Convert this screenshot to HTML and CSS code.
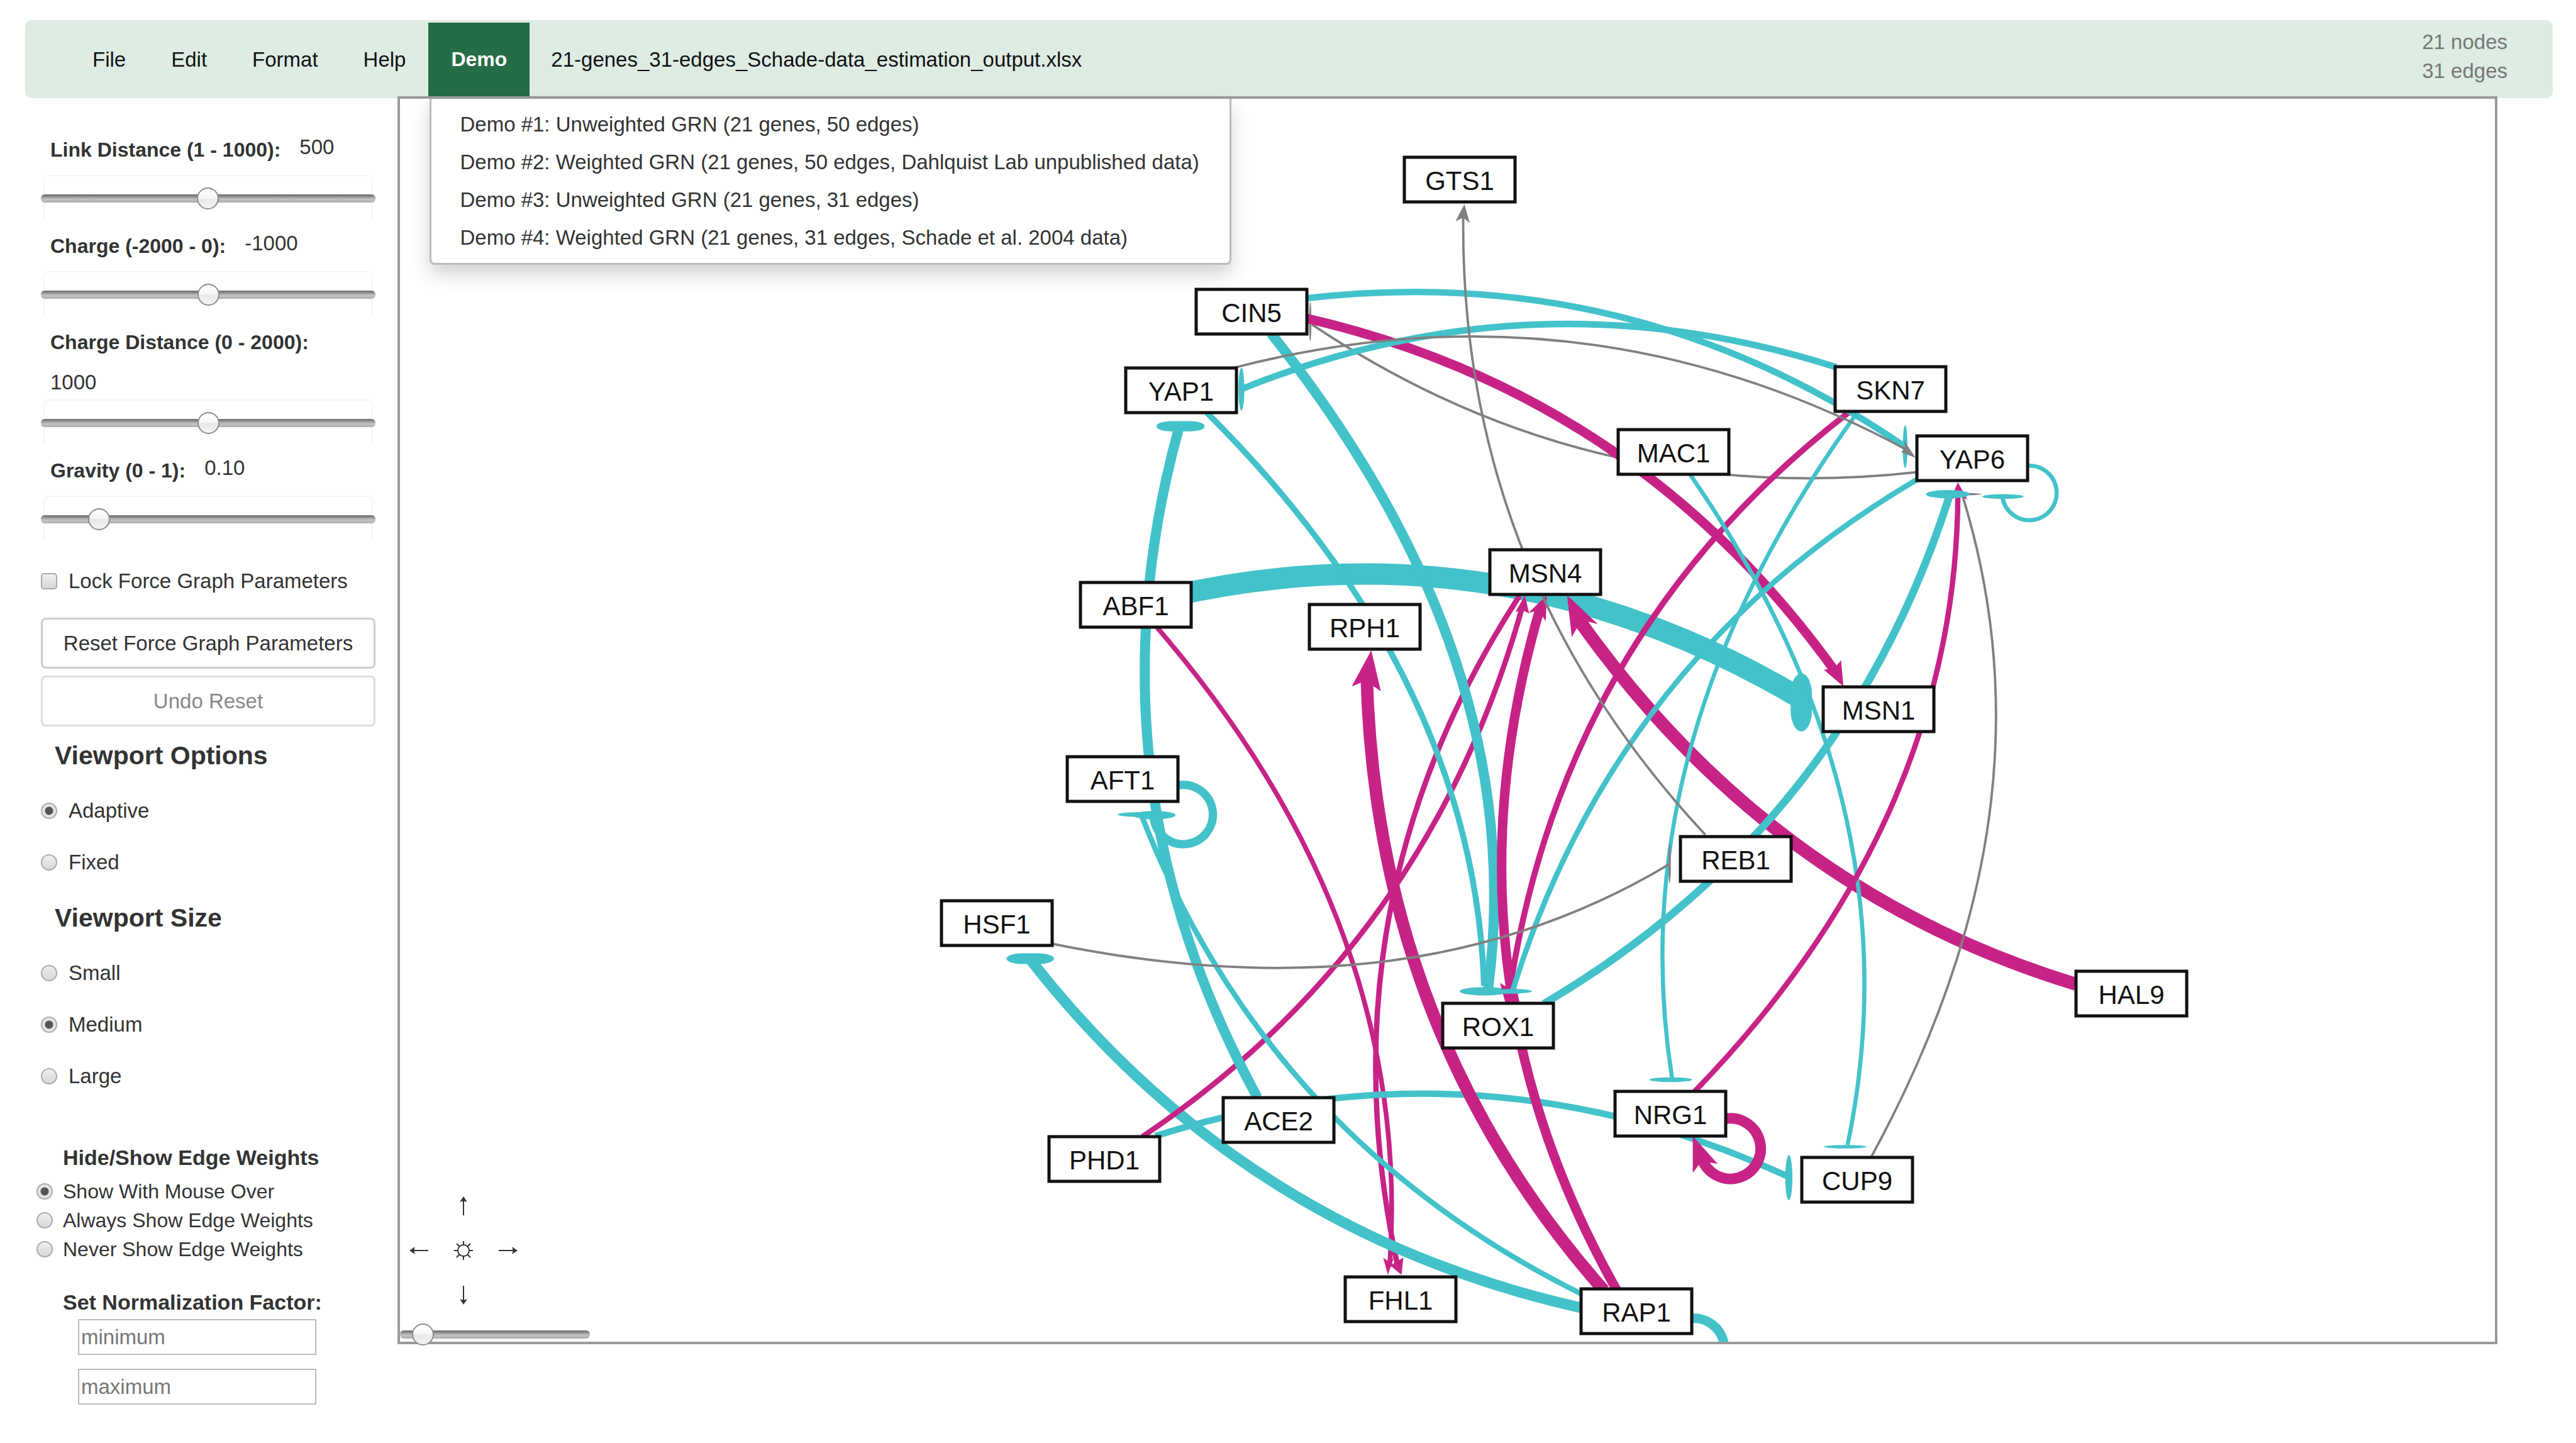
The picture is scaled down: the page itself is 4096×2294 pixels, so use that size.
FILE: index.html
```html
<!DOCTYPE html>
<html lang="en">
<head>
<meta charset="utf-8">
<title>GRNsight</title>
<link rel="stylesheet" href="styles.css">
</head>
<body>
<header class="navbar">
  <nav>
    <ul class="menu">
      <li><a class="menu-link" href="#file">File</a></li>
      <li><a class="menu-link" href="#edit">Edit</a></li>
      <li><a class="menu-link" href="#format">Format</a></li>
      <li><a class="menu-link" href="#help">Help</a></li>
      <li class="dropdown">
        <a class="menu-link menu-link-open" href="#demo">Demo</a>
        <ul class="dropdown-menu">
          <li><a href="#demo1">Demo #1: Unweighted GRN (21 genes, 50 edges)</a></li>
          <li><a href="#demo2">Demo #2: Weighted GRN (21 genes, 50 edges, Dahlquist Lab unpublished data)</a></li>
          <li><a href="#demo3">Demo #3: Unweighted GRN (21 genes, 31 edges)</a></li>
          <li><a href="#demo4">Demo #4: Weighted GRN (21 genes, 31 edges, Schade et al. 2004 data)</a></li>
        </ul>
      </li>
      <li class="file-name">21-genes_31-edges_Schade-data_estimation_output.xlsx</li>
    </ul>
  </nav>
  <div class="counts">
    <div>21 nodes</div>
    <div>31 edges</div>
  </div>
</header>

<main class="workspace">
  <aside class="sidebar">
    <section class="params">
      <div class="param">
        <div class="param-head"><label for="link">Link Distance (1 - 1000):</label><output for="link">500</output></div>
        <div class="param-box"><input class="slider" id="link" type="range" min="1" max="1000" value="500"></div>
      </div>
      <div class="param">
        <div class="param-head"><label for="charge">Charge (-2000 - 0):</label><output for="charge">-1000</output></div>
        <div class="param-box"><input class="slider" id="charge" type="range" min="-2000" max="0" value="-1000"></div>
      </div>
      <div class="param">
        <div class="param-head param-head-stacked"><label for="chargedist">Charge Distance (0 - 2000):</label><output for="chargedist">1000</output></div>
        <div class="param-box"><input class="slider" id="chargedist" type="range" min="0" max="2000" value="1000"></div>
      </div>
      <div class="param">
        <div class="param-head"><label for="gravity">Gravity (0 - 1):</label><output for="gravity">0.10</output></div>
        <div class="param-box"><input class="slider" id="gravity" type="range" min="0" max="1" step="0.01" value="0.15"></div>
      </div>
    </section>

    <label class="choice lock"><input class="tick" type="checkbox">Lock Force Graph Parameters</label>

    <div class="actions">
      <button class="btn" type="button">Reset Force Graph Parameters</button>
      <button class="btn" type="button" disabled>Undo Reset</button>
    </div>

    <h3 class="group-title">Viewport Options</h3>
    <div class="choices">
      <label class="choice"><input class="dot" type="radio" name="mode" checked>Adaptive</label>
      <label class="choice"><input class="dot" type="radio" name="mode">Fixed</label>
    </div>

    <h3 class="group-title group-title-next">Viewport Size</h3>
    <div class="choices">
      <label class="choice"><input class="dot" type="radio" name="size">Small</label>
      <label class="choice"><input class="dot" type="radio" name="size" checked>Medium</label>
      <label class="choice"><input class="dot" type="radio" name="size">Large</label>
    </div>

    <section class="weights">
      <h4 class="weights-title">Hide/Show Edge Weights</h4>
      <div class="weights-list">
        <label class="choice"><input class="dot" type="radio" name="weights" checked>Show With Mouse Over</label>
        <label class="choice"><input class="dot" type="radio" name="weights">Always Show Edge Weights</label>
        <label class="choice"><input class="dot" type="radio" name="weights">Never Show Edge Weights</label>
      </div>
      <h4 class="weights-title">Set Normalization Factor:</h4>
      <div class="factors">
        <input type="text" aria-label="Minimum" placeholder="minimum">
        <input type="text" aria-label="Maximum" placeholder="maximum">
      </div>
    </section>
  </aside>

  <section class="canvas">
    <svg class="graph" viewBox="0 0 3331 1976" role="img" aria-label="Gene regulatory network">
      <g class="edges" transform="translate(-636 -157) scale(0.9431)">
        <path class="down" stroke-width="36" d="M1975 1005Q2534 879 3037 1178"/>
        <rect class="cap down" x="3019" y="1135" width="36" height="98" rx="18" ry="36"/>
        <path class="up" stroke-width="9" d="M2562 1004Q2225 1522 2356 2132"/>
        <path class="up" stroke-width="8" d="M1951 1058C2215 1364 2372 1721 2343 2135"/>
        <path class="cap up" d="M2340 2149L2332 2120L2342 2127L2350 2120ZM2363 2149L2344 2133L2356 2126L2366 2120Z"/>
        <path class="down" stroke-width="18" d="M2668 2205Q2098 2078 1739 1620"/>
        <rect class="cap down" x="1697" y="1607" width="80" height="18" rx="26" ry="9"/>
        <path class="down" stroke-width="11" d="M1948 1915Q2491 1744 3012 1982"/>
        <ellipse class="cap down" cx="3016" cy="1985" rx="6" ry="38"/>
        <path class="up" stroke-width="9" d="M1926 1916Q2409 1592 2568 1018"/>
        <path class="cap up" d="M2571 1003L2555 1032L2566 1028L2578 1034Z"/>
        <path class="down" stroke-width="9" d="M2668 2182Q2138 1919 1926 1378"/>
        <ellipse class="cap down" cx="1922" cy="1373" rx="38" ry="4"/>
        <path class="grey" stroke-width="4" d="M3232 796Q2676 858 2212 547"/>
        <ellipse class="cap grey" cx="2209" cy="542" rx="2" ry="33"/>
        <path class="down" stroke-width="10" d="M2034 695C2300 959 2490 1281 2502 1662"/>
        <ellipse class="cap down" cx="2498" cy="1670" rx="36" ry="5"/>
        <path class="up" stroke-width="16" d="M2200 536Q2763 665 3100 1140"/>
        <path class="cap up" d="M3108 1157L3104 1113L3092 1127L3075 1129Z"/>
        <path class="down" stroke-width="11" d="M3096 619Q2590 457 2095 655"/>
        <ellipse class="cap down" cx="2093" cy="656" rx="5" ry="36"/>
        <path class="down" stroke-width="17" d="M2143 562C2397 881 2563 1249 2509 1666"/>
        <ellipse class="cap down" cx="2503" cy="1671" rx="42" ry="7"/>
        <path class="up" stroke-width="22" d="M3500 1659Q2984 1502 2660 1042"/>
        <path class="cap up" d="M2642 1003L2650 1074L2660 1056L2678 1048L2694 1052Z"/>
        <path class="up" stroke-width="10" d="M3117 695Q2636 1067 2545 1672"/>
        <path class="down" stroke-width="11" d="M2200 503Q2751 439 3209 751"/>
        <ellipse class="cap down" cx="3212" cy="753" rx="4" ry="36"/>
        <path class="down" stroke-width="7" d="M2849 799C3086 1141 3201 1518 3115 1930"/>
        <ellipse class="cap down" cx="3111" cy="1933" rx="36" ry="3"/>
        <path class="down" stroke-width="7" d="M3131 696C2890 1029 2754 1402 2819 1817"/>
        <ellipse class="cap down" cx="2817" cy="1820" rx="36" ry="4"/>
        <path class="up" stroke-width="21" d="M2704 2175Q2318 1738 2304 1132"/>
        <path class="cap up" d="M2312 1096L2279 1157L2294 1151L2313 1155L2328 1165Z"/>
        <path class="up" stroke-width="16" d="M2726 2175Q2419 1631 2597 1024"/>
        <path class="cap up" d="M2608 1003L2577 1033L2590 1030L2600 1038L2606 1047ZM2538 1690L2529 1657L2541 1664L2556 1662L2562 1690Z"/>
        <path class="down" stroke-width="9" d="M3236 806Q2726 1104 2551 1668"/>
        <ellipse class="cap down" cx="2546" cy="1671" rx="37" ry="4"/>
        <path class="up" stroke-width="9" d="M2856 1841C3126 1563 3300 1228 3301 830"/>
        <path class="cap up" d="M3301 813L3288 843L3301 836L3317 842Z"/>
        <path class="grey" stroke-width="4" d="M3155 1950C3347 1598 3430 1226 3308 833"/>
        <ellipse class="cap grey" cx="3306" cy="833" rx="35" ry="2"/>
        <path class="down" stroke-width="13" d="M2603 1692Q3108 1395 3286 838"/>
        <ellipse class="cap down" cx="3284" cy="833" rx="37" ry="7"/>
        <path class="down" stroke-width="17" d="M2120 1850Q1825 1309 1988 720"/>
        <rect class="cap down" x="1950" y="710" width="81" height="17" rx="24" ry="8"/>
        <path class="down" stroke-width="14" d="M1985 1324A50 50 0 1 1 1945 1376"/>
        <ellipse class="cap down" cx="1946" cy="1374" rx="36" ry="7"/>
        <path class="up" stroke-width="18" d="M2908 1886A51 51 0 1 1 2869 1952"/>
        <path class="cap up" d="M2854 1915L2854 1977L2869 1957L2896 1962Z"/>
        <path class="down" stroke-width="7" d="M3418 785A46 46 0 1 1 3376 838"/>
        <ellipse class="cap down" cx="3377" cy="837" rx="35" ry="4"/>
        <path class="down" stroke-width="16" d="M2852 2222A52 52 0 0 1 2907 2280"/>
        <path class="grey" stroke-width="4" d="M2875 1407Q2461 962 2467 365"/>
        <path class="cap grey" d="M2469 344L2454 373L2467 367L2478 376Z"/>
        <path class="grey" stroke-width="4" d="M1774 1591C2145 1666 2498 1646 2814 1457"/>
        <ellipse class="cap grey" cx="2815" cy="1455" rx="2" ry="34"/>
        <path class="grey" stroke-width="4" d="M2080 620Q2675 466 3218 760"/>
        <path class="cap grey" d="M3230 772L3205 762L3213 756L3209 741Z"/>
      </g>
      <g class="nodes">
        <g transform="translate(1685 129)"><rect class="box" x="-88" y="-36" width="176" height="71"/><text y="16">GTS1</text></g>
        <g transform="translate(1354 339)"><rect class="box" x="-88" y="-36" width="176" height="71"/><text y="16">CIN5</text></g>
        <g transform="translate(1242 464)"><rect class="box" x="-88" y="-36" width="176" height="71"/><text y="16">YAP1</text></g>
        <g transform="translate(2370 462)"><rect class="box" x="-88" y="-36" width="176" height="71"/><text y="16">SKN7</text></g>
        <g transform="translate(2025 562)"><rect class="box" x="-88" y="-36" width="176" height="71"/><text y="16">MAC1</text></g>
        <g transform="translate(2500 572)"><rect class="box" x="-88" y="-36" width="176" height="71"/><text y="16">YAP6</text></g>
        <g transform="translate(1821 753)"><rect class="box" x="-88" y="-36" width="176" height="71"/><text y="16">MSN4</text></g>
        <g transform="translate(1170 805)"><rect class="box" x="-88" y="-36" width="176" height="71"/><text y="16">ABF1</text></g>
        <g transform="translate(1534 840)"><rect class="box" x="-88" y="-36" width="176" height="71"/><text y="16">RPH1</text></g>
        <g transform="translate(2351 971)"><rect class="box" x="-88" y="-36" width="176" height="71"/><text y="16">MSN1</text></g>
        <g transform="translate(1149 1082)"><rect class="box" x="-88" y="-36" width="176" height="71"/><text y="16">AFT1</text></g>
        <g transform="translate(2124 1209)"><rect class="box" x="-88" y="-36" width="176" height="71"/><text y="16">REB1</text></g>
        <g transform="translate(949 1311)"><rect class="box" x="-88" y="-36" width="176" height="71"/><text y="16">HSF1</text></g>
        <g transform="translate(2753 1423)"><rect class="box" x="-88" y="-36" width="176" height="71"/><text y="16">HAL9</text></g>
        <g transform="translate(1746 1474)"><rect class="box" x="-88" y="-36" width="176" height="71"/><text y="16">ROX1</text></g>
        <g transform="translate(1397 1624)"><rect class="box" x="-88" y="-36" width="176" height="71"/><text y="16">ACE2</text></g>
        <g transform="translate(2020 1614)"><rect class="box" x="-88" y="-36" width="176" height="71"/><text y="16">NRG1</text></g>
        <g transform="translate(1120 1686)"><rect class="box" x="-88" y="-36" width="176" height="71"/><text y="16">PHD1</text></g>
        <g transform="translate(2317 1719)"><rect class="box" x="-88" y="-36" width="176" height="71"/><text y="16">CUP9</text></g>
        <g transform="translate(1591 1909)"><rect class="box" x="-88" y="-36" width="176" height="71"/><text y="16">FHL1</text></g>
        <g transform="translate(1966 1928)"><rect class="box" x="-88" y="-36" width="176" height="71"/><text y="16">RAP1</text></g>
      </g>
    </svg>

    <div class="pan">
      <button class="pan-up" type="button" aria-label="Scroll up"><svg viewBox="0 0 32 32"><path d="M16 31V4"/><path class="head" d="M16 1L22 10Q16 7 10 10Z"/></svg></button>
      <button class="pan-left" type="button" aria-label="Scroll left"><svg viewBox="0 0 32 32"><path d="M31 16H4"/><path class="head" d="M1 16L10 10Q7 16 10 22Z"/></svg></button>
      <button class="pan-center" type="button" aria-label="Center"><svg viewBox="0 0 32 32"><circle cx="16" cy="16" r="9"/><path d="M16 7V1M16 25V31M7 16H1M25 16H31M22 10L27 5M10 10L5 5M22 22L27 27M10 22L5 27"/></svg></button>
      <button class="pan-right" type="button" aria-label="Scroll right"><svg viewBox="0 0 32 32"><path d="M1 16H28"/><path class="head" d="M31 16L22 10Q25 16 22 22Z"/></svg></button>
      <button class="pan-down" type="button" aria-label="Scroll down"><svg viewBox="0 0 32 32"><path d="M16 1V28"/><path class="head" d="M16 31L22 22Q16 25 10 22Z"/></svg></button>
    </div>
    <input class="slider zoom" type="range" aria-label="Zoom" min="0" max="100" value="7">
  </section>
</main>
</body>
</html>
```
FILE: styles.css
```css
* {
  box-sizing: border-box;
}

body {
  margin: 0;
  padding-top: 32px;
  background: #fff;
  color: #333;
  font: 33px/46px "Liberation Sans", Arial, sans-serif;
}

ul {
  margin: 0;
  padding: 0;
  list-style: none;
}

a {
  color: inherit;
  text-decoration: none;
}

h3,
h4 {
  margin: 0;
}

button,
input {
  margin: 0;
  color: inherit;
  font: inherit;
}

/* Top bar */

.navbar {
  display: flex;
  justify-content: space-between;
  margin: 0 37px 0 40px;
  padding: 4px 72px 3px 71px;
  border-radius: 10px;
  background: #deece4;
}

.menu {
  display: flex;
  color: #111;
}

.menu-link,
.file-name {
  display: block;
  padding: 0 36px;
  line-height: 117px;
}

.file-name {
  padding-left: 34px;
}

.menu-link-open {
  background: #256d46;
  color: #fff;
  font-size: 32px;
  font-weight: bold;
}

.dropdown {
  position: relative;
}

.dropdown-menu {
  position: absolute;
  z-index: 2;
  top: 121px;
  left: 2px;
  padding: 11px 48px 10px 45px;
  border: 3px solid #bbb;
  border-top: 0;
  border-radius: 0 0 8px 8px;
  background: #fff;
  box-shadow: 0 15px 30px rgba(0, 0, 0, 0.175);
  color: #333;
  line-height: 60px;
  white-space: nowrap;
}

.counts {
  padding-top: 8px;
  color: #777;
}

/* Page body */

.workspace {
  display: grid;
  grid-template-columns: 632px 1fr;
  align-items: start;
  margin-top: -3px;
  padding-right: 125px;
}

.sidebar {
  padding: 62px 35px 0 65px;
}

.param {
  margin-bottom: 20px;
}

.param-head {
  display: flex;
  gap: 30px;
  padding: 0 15px 17px;
}

.param-head label {
  font-size: 32px;
  font-weight: bold;
}

.param-head output {
  line-height: 38px;
}

.param-head-stacked {
  flex-direction: column;
  gap: 22px;
  padding-bottom: 8px;
}

.param-box {
  height: 70px;
  margin: 0 4px;
  padding-top: 18px;
  border: 2px solid #f5f5f5;
  border-bottom: 0;
  border-radius: 8px 8px 0 0;
}

.param-box .slider {
  width: calc(100% + 12px);
  margin: 0 -6px;
}

.slider {
  display: block;
  height: 35px;
  background: none;
  appearance: none;
}

.slider::-webkit-slider-runnable-track {
  height: 13px;
  border-radius: 6px;
  background: linear-gradient(#777 0 2px, #999 4px, #c4c4c4 8px, #aaa);
}

.slider::-webkit-slider-thumb {
  width: 35px;
  height: 35px;
  margin-top: -11px;
  border: 2px solid #8c8c8c;
  border-radius: 50%;
  background: linear-gradient(#fff, #f4f5f5 50%, #e8e9e9 50%, #f2f3f3);
  appearance: none;
}

.choice {
  display: flex;
  align-items: center;
  gap: 18px;
}

.tick,
.dot {
  flex: none;
  width: 26px;
  height: 26px;
  border: 2px solid #aaa;
  background: linear-gradient(#efefef, #d8d8d8);
  appearance: none;
}

.tick {
  border-radius: 5px;
}

.dot {
  border-radius: 50%;
}

.dot:checked {
  background: radial-gradient(circle, #555 0 6px, #e4e4e4 7px);
}

.lock {
  margin-top: 43px;
}

.actions {
  display: grid;
  gap: 11px;
  margin: 35px 0 21px;
}

.btn {
  height: 81px;
  padding: 0;
  border: 3px solid #ccc;
  border-radius: 8px;
  background: #fff;
}

.btn:disabled {
  border-color: #ddd;
  color: #888;
}

.group-title {
  margin-bottom: 40px;
  padding-left: 22px;
  font-size: 41px;
  line-height: 50px;
}

.group-title-next {
  margin-top: 40px;
}

.choices {
  display: grid;
  gap: 36px;
}

.weights {
  margin-top: 83px;
}

.weights-title {
  padding-left: 35px;
  font-size: 34px;
}

.weights-list {
  margin: 8px 0 38px -7px;
  font-size: 32px;
}

.weights-list .choice {
  gap: 16px;
}

.factors {
  display: grid;
  gap: 22px;
  margin: 4px 94px 0 59px;
}

.factors input {
  width: 100%;
  height: 57px;
  padding: 0 3px;
  border: 2px solid #bbb;
  background: #fff;
}

.factors input::placeholder {
  color: #777;
}

/* Graph */

.canvas {
  position: relative;
  border: 4px solid #999b9b;
}

.graph {
  display: block;
  width: 100%;
  height: auto;
}

.edges path {
  fill: none;
}

.up {
  stroke: #c72387;
}

.down {
  stroke: #43c2ca;
}

.grey {
  stroke: #808080;
}

.edges .cap {
  stroke: none;
}

.edges .cap.up {
  fill: #c72387;
}

.edges .cap.down {
  fill: #43c2ca;
}

.edges .cap.grey {
  fill: #808080;
}

.box {
  fill: #fff;
  stroke: #111;
  stroke-width: 5px;
}

.nodes text {
  fill: #111;
  font-size: 42px;
  text-anchor: middle;
}

.pan {
  position: absolute;
  bottom: 44px;
  left: 0;
  display: grid;
  grid-template-areas: ". up ." "left center right" ". down .";
  grid-template-columns: 60px 60px 60px;
  grid-auto-rows: 60px;
  gap: 11px;
}

.pan button {
  display: grid;
  place-items: center;
  padding: 0;
  border: 0;
  background: none;
}

.pan svg {
  width: 32px;
  height: 32px;
  fill: none;
  stroke: #333;
  stroke-width: 2px;
}

.pan .head {
  fill: #333;
  stroke: none;
}

.pan-up {
  grid-area: up;
}

.pan-left {
  grid-area: left;
}

.pan-center {
  grid-area: center;
}

.pan-right {
  grid-area: right;
}

.pan-down {
  grid-area: down;
}

.zoom {
  position: absolute;
  bottom: -6px;
  left: 0;
  width: 302px;
}
```
